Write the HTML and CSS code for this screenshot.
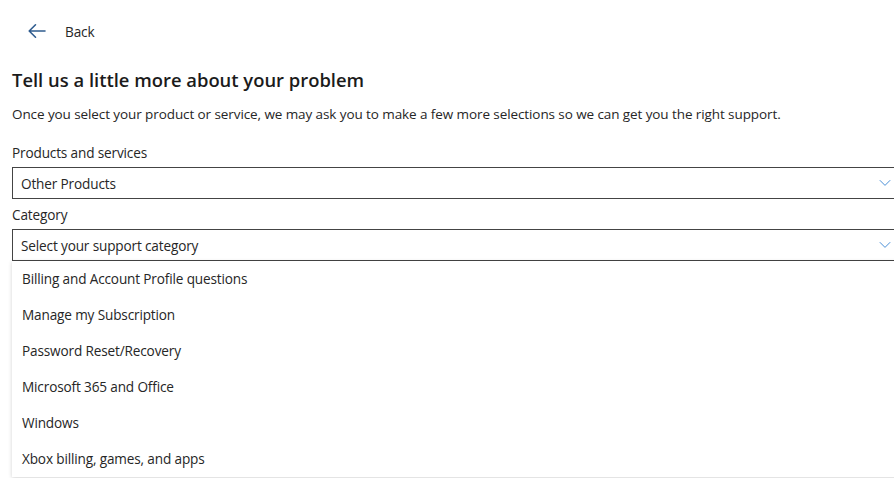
FILE: index.html
```html
<!DOCTYPE html>
<html lang="en">
<head>
<meta charset="utf-8">
<title>Support</title>
<link rel="stylesheet" href="styles.css">
</head>
<body>
<div class="page">
  <a class="back" href="#">
    <svg class="back-icon" width="20" height="16" viewBox="0 0 20 16" aria-hidden="true">
      <path d="M18 8H2.5M8.5 1.8L2.2 8l6.3 6.2" fill="none" stroke="#2f5c8f" stroke-width="1.6" stroke-linecap="round" stroke-linejoin="round"/>
    </svg>
    <span>Back</span>
  </a>
  <h1 class="title">Tell us a little more about your problem</h1>
  <p class="intro">Once you select your product or service, we may ask you to make a few more selections so we can get you the right support.</p>
  <div class="field">
    <label class="label">Products and services</label>
    <div class="select">
      <span>Other Products</span>
      <svg class="chev" width="12" height="8" viewBox="0 0 12 8" aria-hidden="true"><path d="M0.8 1.2L6 6.4l5.2-5.2" fill="none" stroke="#4a8fd6" stroke-width="1"/></svg>
    </div>
  </div>
  <div class="field">
    <label class="label">Category</label>
    <div class="select-wrap">
      <div class="select">
        <span>Select your support category</span>
        <svg class="chev" width="12" height="8" viewBox="0 0 12 8" aria-hidden="true"><path d="M0.8 1.2L6 6.4l5.2-5.2" fill="none" stroke="#4a8fd6" stroke-width="1"/></svg>
      </div>
      <ul class="menu">
        <li>Billing and Account Profile questions</li>
        <li>Manage my Subscription</li>
        <li>Password Reset/Recovery</li>
        <li>Microsoft 365 and Office</li>
        <li>Windows</li>
        <li>Xbox billing, games, and apps</li>
      </ul>
    </div>
  </div>
  <div class="rule"></div>
</div>
</body>
</html>
```
FILE: styles.css
```css
html, body {
  margin: 0;
  padding: 0;
  background: #fff;
  overflow: hidden;
}
body {
  font-family: "Open Sans", "Noto Sans", "Liberation Sans", sans-serif;
  color: #262626;
  width: 894px;
  height: 478px;
  letter-spacing: -0.15px;
}
.page {
  position: relative;
  padding: 0 0 0 12px;
  width: 906px;
}
.back {
  display: flex;
  align-items: center;
  gap: 18px;
  height: 30px;
  margin: 16px 0 0 15px;
  color: #262626;
  text-decoration: none;
  font-size: 13.6px;
}
.back-icon { display: block; }
.title {
  margin: 20px 0 0;
  font-size: 18.4px;
  font-weight: 600;
  line-height: 28px;
  color: #1b1b1b;
  letter-spacing: 0;
}
.intro {
  margin: 10px 0 0;
  font-size: 13.5px;
  line-height: 20px;
  letter-spacing: -0.09px;
}
.label {
  display: block;
  font-size: 13.6px;
  line-height: 20px;
  padding-top: 19px;
  padding-bottom: 4px;
}
.field + .field .label { padding-top: 6px; }
.select-wrap { position: relative; }
.select {
  display: flex;
  align-items: center;
  justify-content: space-between;
  box-sizing: border-box;
  height: 32px;
  border: 1px solid #444;
  padding: 0 20px 0 8px;
  font-size: 13.6px;
  width: 900px;
}
.chev { display: block; }
.menu {
  position: absolute;
  left: 0;
  top: 32px;
  width: 900px;
  margin: 0;
  padding: 0;
  list-style: none;
  background: #fff;
  box-shadow: 0 1px 4px rgba(0,0,0,0.18);
  z-index: 2;
}
.menu li {
  height: 36px;
  line-height: 36px;
  padding-left: 10px;
  font-size: 13.6px;
}
.rule {
  position: absolute;
  left: 0;
  top: 476px;
  width: 893px;
  border-top: 1px solid #d0d0d0;
}
```
